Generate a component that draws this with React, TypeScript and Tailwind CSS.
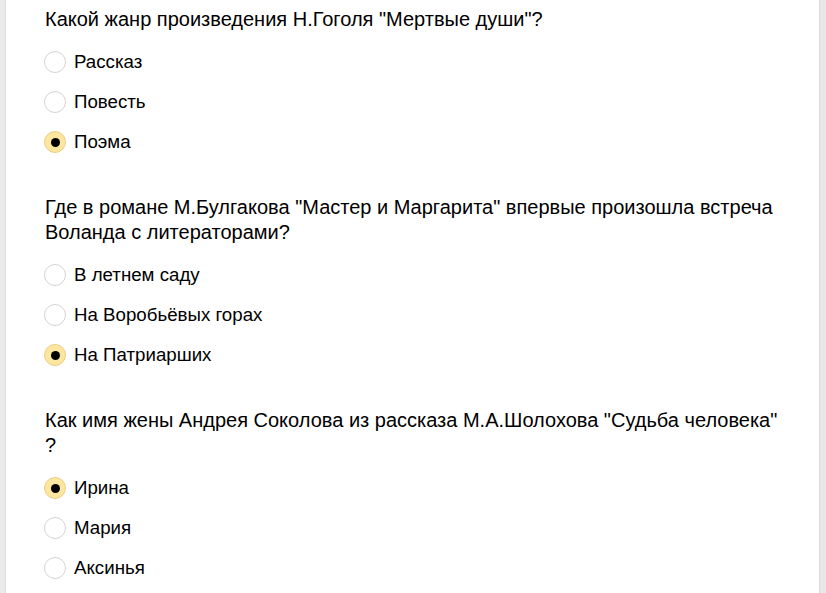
import React from 'react';

type Question = {
    text: string;
    options: string[];
    selected: number;
};

const questions: Question[] = [
    {
        text: 'Какой жанр произведения Н.Гоголя "Мертвые души"?',
        options: ['Рассказ', 'Повесть', 'Поэма'],
        selected: 2,
    },
    {
        text: 'Где в романе М.Булгакова "Мастер и Маргарита" впервые произошла встреча Воланда с литераторами?',
        options: ['В летнем саду', 'На Воробьёвых горах', 'На Патриарших'],
        selected: 2,
    },
    {
        text: 'Как имя жены Андрея Соколова из рассказа М.А.Шолохова "Судьба человека" ?',
        options: ['Ирина', 'Мария', 'Аксинья'],
        selected: 0,
    },
];

function Radio({ checked }: { checked: boolean }) {
    if (checked) {
        return (
            <span className="flex h-[22px] w-[22px] shrink-0 items-center justify-center rounded-full border border-[#e9cf83] bg-[#fde6a0]">
                <span className="h-[9px] w-[9px] rounded-full bg-black" />
            </span>
        );
    }
    return <span className="h-[22px] w-[22px] shrink-0 rounded-full border border-[#d4d4d4] bg-white" />;
}

export default function App() {
    return (
        <div className="flex h-[593px] w-[826px] overflow-hidden bg-[#e8e8e8]" style={{ fontFamily: '"Liberation Sans", Arial, sans-serif' }}>
            <div className="h-full w-[6px] shrink-0 border-r border-[#dedede] bg-[#ebebeb]" />
            <div className="h-full w-[813px] shrink-0 bg-white pl-[38px] pr-[34px] pt-[7px]">
                {questions.map((q, qi) => (
                    <div key={qi} className={qi === 0 ? 'mb-[33px]' : 'mb-[33px]'}>
                        <p className="mb-[10px] pl-[1px] text-[20px] leading-[25px] text-black">{q.text}</p>
                        {q.options.map((opt, oi) => (
                            <label key={oi} className="flex h-10 items-center gap-2 text-[18.7px] text-black">
                                <Radio checked={oi === q.selected} />
                                <span>{opt}</span>
                            </label>
                        ))}
                    </div>
                ))}
            </div>
            <div className="h-full flex-1 border-l border-[#dcdcdc] bg-[#e8e8e8]" />
        </div>
    );
}
